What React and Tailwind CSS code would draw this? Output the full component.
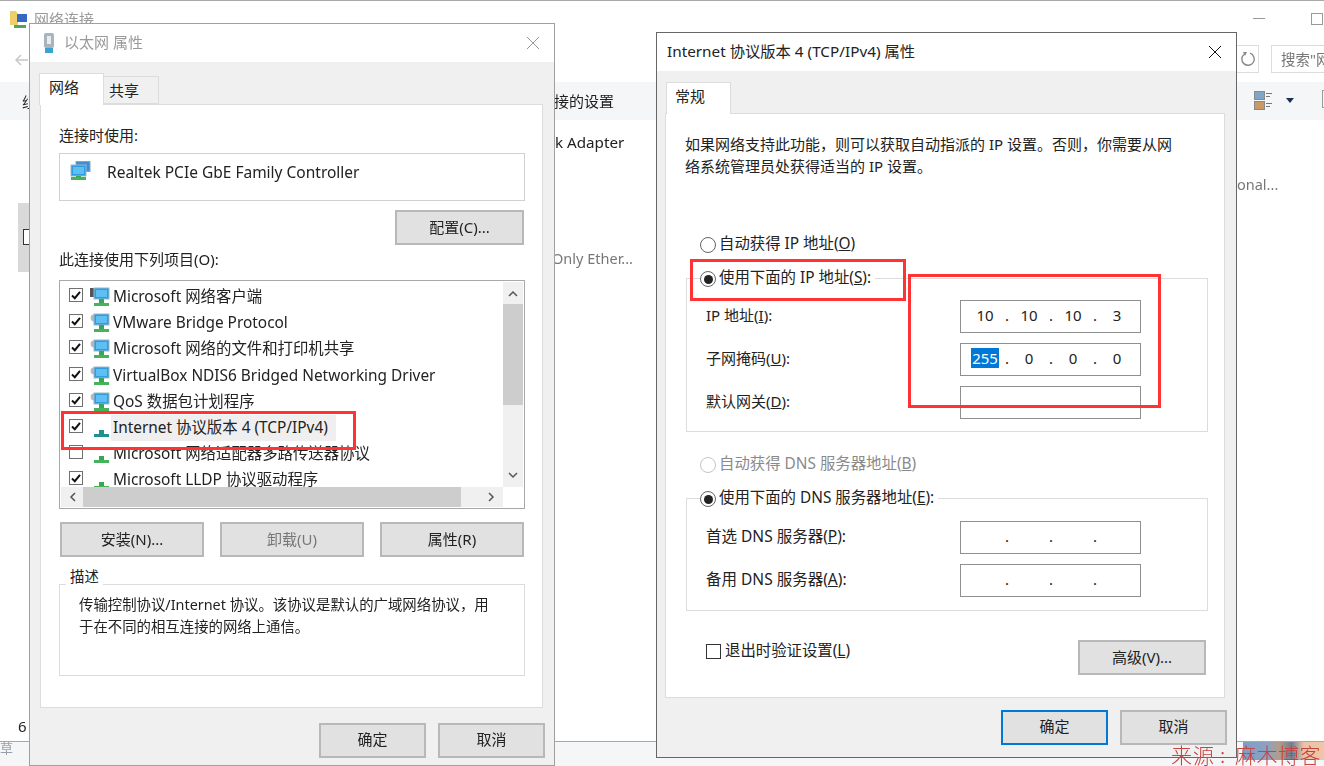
import React from "react";

const font = "font-['Noto_Sans','Noto_Sans_CJK_SC',sans-serif]";

function Net({ dim = false, gear = false, mono = false, only = false, double = false }) {
  return (
    <svg width="22" height="20" viewBox="0 0 22 20" className="shrink-0">
      {!only && gear && <circle cx="4" cy="5" r="3.4" fill="#b8b8b8" />}
      {!only && mono && <rect x="0" y="1" width="8" height="9" fill="#555" />}
      {double && <rect x="7" y="0.5" width="14" height="10" fill="#3f8fd0" stroke="#7fa8c4" />}
      {!only && (
        <>
          <rect x={double ? "2" : "4"} y={double ? "4" : "1"} width="15" height="11" fill="#2f9be0" stroke="#9fb8c8" />
          <rect x={double ? "4" : "6"} y={double ? "6" : "3"} width="11" height="7" fill="#5cc0f2" />
        </>
      )}
      <rect x={double ? "7" : "9"} y={double ? "15" : "12"} width="5" height={double ? "2" : "4"} fill={dim ? "#1f8f8f" : "#34a853"} />
      <rect x={double ? "2" : "4"} y="16" width="15" height="3" fill={dim ? "#1f8f8f" : "#45b35a"} />
    </svg>
  );
}

function Check({ on = true }) {
  return (
    <span className="w-[14px] h-[14px] shrink-0 border border-[#707070] bg-white flex items-center justify-center -translate-y-[2px]">
      {on && (
        <svg width="12" height="12" viewBox="0 0 12 12">
          <path d="M2 6.5 L4.8 9.2 L10 2.8" fill="none" stroke="#111" strokeWidth="2" />
        </svg>
      )}
    </span>
  );
}

function Btn({ children, w, primary, disabled, low }) {
  return (
    <div
      className={`${w} h-[35px] flex items-center justify-center ${low ? "pb-[2px]" : "pb-[1px]"} text-[15px] bg-[#e1e1e1] border-2 ${
        primary ? "border-[#0078d7]" : "border-[#b8b8b8]"
      } ${disabled ? "bg-[#cccccc] text-[#777]" : "text-[#222]"}`}
    >
      {children}
    </div>
  );
}

function Radio({ on, off }) {
  return (
    <span
      className={`w-[16px] h-[16px] rounded-full border bg-white flex items-center justify-center shrink-0 translate-y-[1px] ${
        off ? "border-[#c4c4c4]" : "border-[#666]"
      }`}
    >
      {on && <span className="w-[9px] h-[9px] rounded-full bg-[#222]" />}
    </span>
  );
}

function IpBox({ vals, sel }) {
  const dot = <span className="w-[14px] text-center">.</span>;
  return (
    <div className="w-[181px] h-[33px] border border-[#8f8f8f] bg-white flex items-center pl-[9px] pb-[3px] text-[15px] text-[#222]">
      {[0, 1, 2, 3].map((i) => (
        <React.Fragment key={i}>
          <span className="w-[30px] text-center">
            {sel && i === 0 ? (
              <span className="bg-[#0078d7] text-white px-[1px]">{vals[i]}</span>
            ) : (
              vals[i] ?? ""
            )}
          </span>
          {i < 3 && dot}
        </React.Fragment>
      ))}
    </div>
  );
}

function IpRow({ label, u, vals, sel, mb = "mb-[10px]", size = "text-[15px]" }) {
  return (
    <div className={`flex items-center justify-between pr-[66px] pl-[19px] ${mb}`}>
      <span className={`${size} text-[#222] pb-[2px]`}>
        {label}(<span className="underline">{u}</span>):
      </span>
      <IpBox vals={vals} sel={sel} />
    </div>
  );
}

const rows = [
  ["Microsoft 网络客户端", true, { mono: true }],
  ["VMware Bridge Protocol", true, { gear: true }],
  ["Microsoft 网络的文件和打印机共享", true, { gear: true }],
  ["VirtualBox NDIS6 Bridged Networking Driver", true, { gear: true }],
  ["QoS 数据包计划程序", true, { gear: true }],
  ["Internet 协议版本 4 (TCP/IPv4)", true, { only: true, dim: true }],
  ["Microsoft 网络适配器多路传送器协议", false, { only: true }],
  ["Microsoft LLDP 协议驱动程序", true, { only: true }],
];

function LeftDialog() {
  return (
    <div className="absolute left-[29px] top-[23px] w-[526px] h-[743px] border border-[#a0a0a0] bg-[#f0f0f0] flex flex-col">
      <div className="h-[38px] bg-white flex items-center pl-[12px] shrink-0">
        <svg width="14" height="22" viewBox="0 0 14 22" className="mr-[8px]">
          <rect x="2" y="1" width="10" height="15" rx="2" fill="#a9b4bd" />
          <rect x="5" y="4" width="4" height="8" fill="#e8edf0" />
          <rect x="3" y="16" width="8" height="5" fill="#3aa0d8" />
        </svg>
        <span className="text-[15px] text-[#9a9a9a] pb-[2px]">以太网 属性</span>
        <svg width="14" height="14" viewBox="0 0 14 14" className="ml-auto mr-[14px]">
          <path d="M1 1 L13 13 M13 1 L1 13" stroke="#9a9a9a" strokeWidth="1" />
        </svg>
      </div>
      <div className="relative flex pl-[9px] h-[42px] shrink-0 items-end">
        <div className="relative z-10 w-[65px] h-[32px] bg-white border border-[#dcdcdc] border-b-0 -mb-[1px] pl-[9px] text-[15px] text-[#222] leading-[26px]">
          网络
        </div>
        <div className="w-[55px] h-[28px] bg-[#f0f0f0] border border-[#dcdcdc] border-l-0 pl-[5px] text-[15px] text-[#222] leading-[27px]">
          共享
        </div>
      </div>
      <div className="mx-[10px] w-[503px] h-[604px] bg-white border border-[#dcdcdc] pl-[18px] pr-[17px] shrink-0">
        <div className="mt-[20px] h-[20px] leading-[20px] text-[15px] text-[#222]">连接时使用:</div>
        <div className="mt-[8px] h-[48px] w-[466px] border border-[#d0d0d0] flex items-start pl-[9px] pt-[7px]">
          <Net double />
          <span className="ml-[16px] text-[15.5px] text-[#222] leading-[22px]">Realtek PCIe GbE Family Controller</span>
        </div>
        <div className="mt-[9px] flex justify-end pr-[1px]">
          <Btn w="w-[129px]">配置(C)...</Btn>
        </div>
        <div className="mt-[4px] h-[20px] leading-[20px] text-[15px] text-[#222]">此连接使用下列项目(O):</div>
        <div className="mt-[11px] w-[466px] h-[229px] border border-[#a8a8a8] relative overflow-hidden">
          <div className="h-[206px] overflow-hidden pt-[3px] pl-[9px]">
            {rows.map(([t, on, ic], i) => (
              <div key={i} className="h-[26.2px] flex items-center">
                <Check on={on} />
                <span className="ml-[7px]"><Net {...ic} /></span>
                <span className={`-ml-[1px] text-[15.4px] text-[#222] leading-[26px] pl-[2px] whitespace-nowrap ${i === 5 ? "bg-[#efefef] pr-[8px]" : ""}`}>
                  {t}
                </span>
              </div>
            ))}
          </div>
          <div className="absolute right-[1px] top-[1px] w-[20px] h-[205px] bg-[#f0f0f0] flex flex-col items-center">
            <svg width="10" height="22" viewBox="0 0 10 22"><path d="M1 14 L5 10 L9 14" fill="none" stroke="#555" strokeWidth="1.5" /></svg>
            <div className="w-full h-[101px] bg-[#cdcdcd]" />
            <svg width="10" height="22" viewBox="0 0 10 22" className="mt-auto"><path d="M1 8 L5 12 L9 8" fill="none" stroke="#555" strokeWidth="1.5" /></svg>
          </div>
          <div className="absolute left-[1px] bottom-[1px] w-[442px] h-[20px] bg-[#f0f0f0] flex items-center">
            <svg width="22" height="20" viewBox="0 0 22 20"><path d="M14 6 L10 10 L14 14" fill="none" stroke="#555" strokeWidth="1.5" /></svg>
            <div className="w-[378px] h-full bg-[#cdcdcd]" />
            <svg width="24" height="20" viewBox="0 0 24 20" className="ml-auto"><path d="M10 6 L14 10 L10 14" fill="none" stroke="#555" strokeWidth="1.5" /></svg>
          </div>
        </div>
        <div className="mt-[13px] flex pl-[1px] gap-[16px]">
          <Btn w="w-[144px]">安装(N)...</Btn>
          <Btn w="w-[144px]" disabled>卸载(U)</Btn>
          <Btn w="w-[144px]">属性(R)</Btn>
        </div>
        <div className="mt-[27px] relative w-[466px] h-[92px] border border-[#dcdcdc] px-[19px] pt-[9px] text-[14.4px] text-[#222] leading-[22px]">
          <span className="absolute left-[6px] -top-[18px] bg-white px-[4px] leading-[20px]">描述</span>
          <div>传输控制协议/Internet 协议。该协议是默认的广域网络协议，用</div>
          <div>于在不同的相互连接的网络上通信。</div>
        </div>
      </div>
      <div className="flex justify-end gap-[12px] pr-[9px] pt-[15px]">
        <Btn w="w-[107px]" low>确定</Btn>
        <Btn w="w-[107px]" low>取消</Btn>
      </div>
    </div>
  );
}

function RightDialog() {
  return (
    <div className="absolute left-[656px] top-[32px] w-[581px] h-[726px] border border-[#666] bg-[#f0f0f0] flex flex-col">
      <div className="h-[38px] bg-white flex items-center pl-[10px] shrink-0">
        <span className="text-[15.3px] text-[#222] pb-[2px]">Internet 协议版本 4 (TCP/IPv4) 属性</span>
        <svg width="14" height="14" viewBox="0 0 14 14" className="ml-auto mr-[14px]">
          <path d="M1 1 L13 13 M13 1 L1 13" stroke="#111" strokeWidth="1" />
        </svg>
      </div>
      <div className="flex pl-[9px] h-[42px] shrink-0 items-end">
        <div className="relative z-10 w-[65px] h-[32px] bg-white border border-[#dcdcdc] border-b-0 -mb-[1px] pl-[8px] text-[15px] text-[#222] leading-[26px]">
          常规
        </div>
      </div>
      <div className="ml-[8px] w-[560px] h-[585px] bg-white border border-[#dcdcdc] pl-[20px] shrink-0 relative">
        <div className="mt-[19px] h-[44px] text-[15px] leading-[22px] text-[#222] -ml-[1px]">
          <div>如果网络支持此功能，则可以获取自动指派的 IP 设置。否则，你需要从网</div>
          <div>络系统管理员处获得适当的 IP 设置。</div>
        </div>
        <div className="mt-[57px] ml-[14px] flex items-center gap-[3px] h-[20px] text-[15.4px] text-[#222]">
          <Radio />
          <span>自动获得 IP 地址(<span className="underline">O</span>)</span>
        </div>
        <div className="mt-[24px] w-[522px] h-[154px] border border-[#dcdcdc] relative pt-[21px]">
          <div className="absolute left-[13px] -top-[11px] bg-white pr-[4px] flex items-center gap-[3px] h-[20px] text-[15.4px] text-[#222]">
            <Radio on />
            <span>使用下面的 IP 地址(<span className="underline">S</span>):</span>
          </div>
          <IpRow label="IP 地址" u="I" vals={["10", "10", "10", "3"]} />
          <IpRow label="子网掩码" u="U" vals={["255", "0", "0", "0"]} sel />
          <IpRow label="默认网关" u="D" vals={[]} mb="" />
        </div>
        <div className="mt-[22px] ml-[14px] flex items-center gap-[3px] h-[20px] text-[15.4px] text-[#8a8a8a]">
          <Radio off />
          <span>自动获得 DNS 服务器地址(<span className="underline">B</span>)</span>
        </div>
        <div className="mt-[24px] w-[522px] h-[113px] border border-[#dcdcdc] relative pt-[22px]">
          <div className="absolute left-[13px] -top-[11px] bg-white pr-[4px] flex items-center gap-[3px] h-[20px] text-[15.4px] text-[#222]">
            <Radio on />
            <span>使用下面的 DNS 服务器地址(<span className="underline">E</span>):</span>
          </div>
          <IpRow label="首选 DNS 服务器" u="P" vals={[]} size="text-[15.5px]" />
          <IpRow label="备用 DNS 服务器" u="A" vals={[]} mb="" size="text-[15.5px]" />
        </div>
        <div className="mt-[29px] flex items-start justify-between pl-[20px] pr-[18px]">
          <div className="flex items-center gap-[4px] h-[20px] mt-[1px] text-[15.4px] text-[#222]">
            <span className="w-[15px] h-[15px] border border-[#333] bg-white" />
            <span>退出时验证设置(<span className="underline">L</span>)</span>
          </div>
          <Btn w="w-[128px]">高级(V)...</Btn>
        </div>
      </div>
      <div className="flex justify-end gap-[12px] pr-[9px] pt-[12px]">
        <Btn w="w-[107px]" primary low>确定</Btn>
        <Btn w="w-[107px]" low>取消</Btn>
      </div>
    </div>
  );
}

function RedBox({ c }) {
  return <div className={`absolute border-[3px] border-[#ff3333] z-20 ${c}`} />;
}

function Background() {
  return (
    <>
      <div className="h-[1px] bg-[#a8a8a8]" />
      <div className="h-[81px] relative" />
      <div className="h-[38px] bg-[#f5f6f7]" />
      {/* back window fragments, partly hidden by dialogs */}
      <svg width="20" height="22" viewBox="0 0 20 22" className="absolute left-[9px] top-[9px]">
        <path d="M1 2 H7 L9 5 V16 H1 Z" fill="#f0cf6a" />
        <rect x="8" y="5" width="10" height="8" fill="#3469c4" />
        <rect x="5" y="16" width="12" height="3" fill="#4aa85a" />
      </svg>
      <span className="absolute left-[34px] top-[9px] text-[15px] leading-[20px] text-[#9a9a9a]">网络连接</span>
      <svg width="14" height="12" viewBox="0 0 14 12" className="absolute left-[15px] top-[54px]">
        <path d="M13 6 H2 M6 1 L1 6 L6 11" fill="none" stroke="#c8c8c8" strokeWidth="1.5" />
      </svg>
      <span className="absolute left-[22px] top-[92px] text-[14.5px] leading-[20px] text-[#222]">组</span>
      <span className="absolute left-[554px] top-[91px] text-[15px] leading-[20px] text-[#222]">接的设置</span>
      <span className="absolute left-[555px] top-[132px] text-[15.2px] leading-[20px] text-[#222]">k Adapter</span>
      <span className="absolute left-[552px] top-[248px] text-[14.5px] leading-[20px] text-[#777]">Only Ether...</span>
      <span className="absolute left-[1237px] top-[174px] text-[14.5px] leading-[20px] text-[#777]">onal...</span>
      <div className="absolute left-[18px] top-[203px] w-[12px] h-[69px] bg-[#d9d9d9]" />
      <div className="absolute left-[23px] top-[229px] w-[7px] h-[16px] bg-white border border-[#333]" />
      <div className="absolute left-[1253px] top-[18px] w-[12px] h-[1px] bg-[#999]" />
      <div className="absolute left-[1311px] top-[13px] w-[12px] h-[12px] border border-[#999]" />
      <div className="absolute left-[1237px] top-[45px] w-[22px] h-[28px] border border-[#dcdcdc] border-l-0 flex items-center justify-center">
        <svg width="16" height="16" viewBox="0 0 16 16">
          <path d="M10 2.2 A6.2 6.2 0 1 1 4.5 3" fill="none" stroke="#8a8a8a" strokeWidth="1.4" />
          <path d="M3 1 L7 1 L5 5 Z" fill="#8a8a8a" />
        </svg>
      </div>
      <div className="absolute left-[1271px] top-[45px] w-[60px] h-[28px] border border-[#dcdcdc] pl-[9px] text-[14.5px] leading-[26px] text-[#777] whitespace-nowrap overflow-hidden">
        搜索"网
      </div>
      <svg width="20" height="20" viewBox="0 0 20 20" className="absolute left-[1254px] top-[91px]">
        <rect x="0.5" y="0.5" width="10" height="8" fill="#7fa5c8" stroke="#8a8a8a" />
        <rect x="0.5" y="10.5" width="10" height="8" fill="#c99a66" stroke="#8a8a8a" />
        <path d="M12 2.5 H18 M12 5.5 H16 M12 12.5 H18 M12 15.5 H16" stroke="#777" />
      </svg>
      <svg width="10" height="6" viewBox="0 0 10 6" className="absolute left-[1285px] top-[98px]">
        <path d="M1 0 H9 L5 5 Z" fill="#1f2f4f" />
      </svg>
      <div className="absolute left-[1322px] top-[90px] w-[4px] h-[18px] border border-[#999]" />
      <span className="absolute left-[18px] top-[716px] text-[15px] leading-[20px] text-[#222]">6</span>
      <div className="absolute left-0 top-[741px] w-full h-[1px] bg-[#a8a8a8]" />
      <div className="absolute left-0 top-[742px] w-full h-[24px] bg-[#f5f6f8] text-[13px] leading-[12px] text-[#9aa0a8]">草</div>
      <div className="absolute left-[1243px] top-[742px] w-[81px] h-[18px] bg-[linear-gradient(90deg,#7f9dc4_0%,#8aa3c5_30%,#b89a85_45%,#6f7f95_60%,#e9c4a4_75%,#eec6a8_100%)]" />
    </>
  );
}

export default function App() {
  return (
    <div className={`relative w-[1324px] h-[766px] overflow-hidden bg-white ${font}`}>
      <div className="absolute inset-0 blur-[0.35px]">
        <Background />
        <LeftDialog />
        <RightDialog />
      </div>
      <RedBox c="left-[61px] top-[411px] w-[295px] h-[39px]" />
      <RedBox c="left-[690px] top-[259px] w-[216px] h-[42px]" />
      <RedBox c="left-[908px] top-[274px] w-[253px] h-[134px]" />
      <div className="absolute left-[1171px] top-[742px] z-30 flex font-['Noto_Sans_CJK_SC',serif] text-[21px] leading-[24px] text-[#c8433f] whitespace-nowrap font-light">
        <span className="w-[49px] tracking-[1px]">来源</span>
        <span className="w-[15px]">:</span>
        <span className="tracking-[0.5px]">麻木博客</span>
      </div>
    </div>
  );
}
